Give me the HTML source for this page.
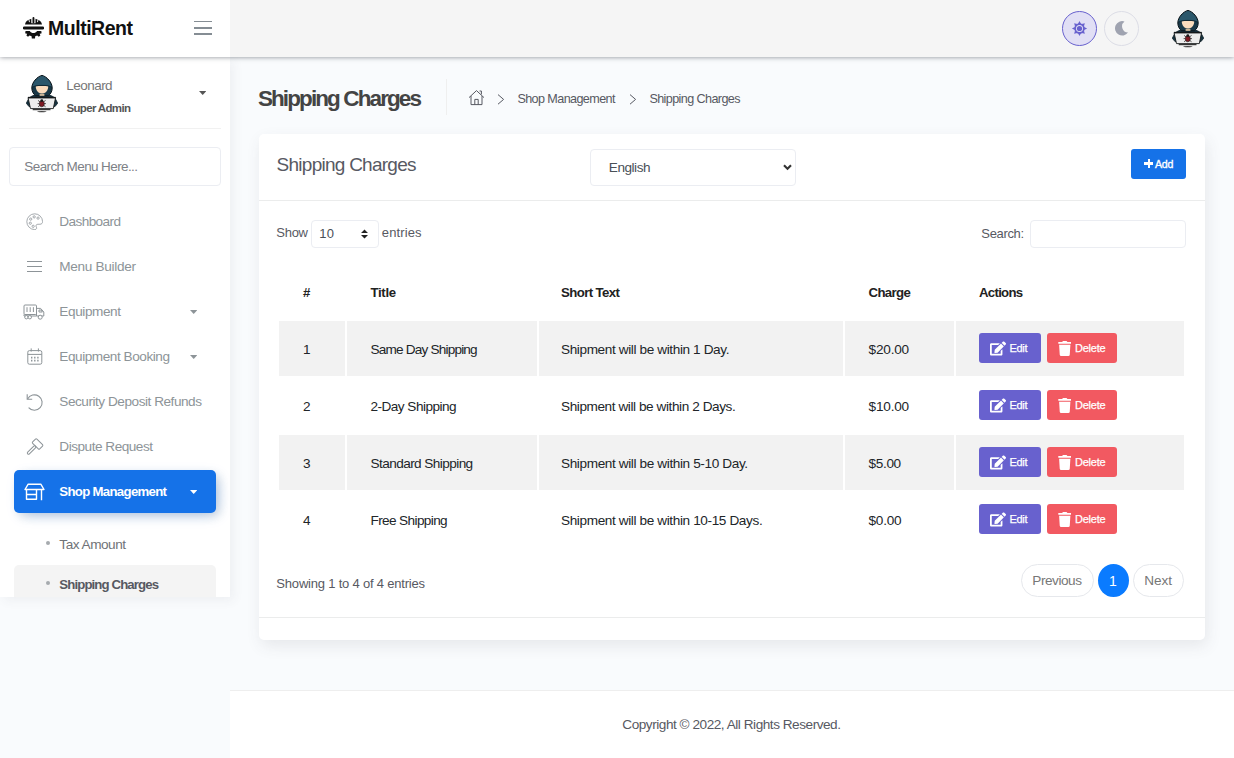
<!DOCTYPE html>
<html lang="en"><head>
<meta charset="utf-8">
<title>Shipping Charges</title>
<style>
*{box-sizing:border-box;margin:0;padding:0}
html,body{width:1234px;height:758px;overflow:hidden}
body{background:#f9fbfd;font-family:"Liberation Sans",sans-serif;font-size:14px;color:#575962;position:relative}
.abs{position:absolute}
.t{position:absolute;white-space:nowrap;line-height:20px;height:20px;margin-top:-10px;margin-left:-.05em}
/* header */
#logohdr{left:0;top:0;width:230px;height:57px;background:#fff;z-index:5}
#tophdr{left:230px;top:0;width:1004px;height:57px;background:#f5f5f5;z-index:4}
#hdrshadow{left:0;top:0;width:1234px;height:57px;box-shadow:0 0 5px rgba(18,23,39,.5);z-index:3}
#sidebar{left:0;top:57px;width:230px;height:540px;background:#fff;box-shadow:4px 4px 10px rgba(69,65,78,.06);z-index:2;overflow:hidden}
.mi{color:#8d9498;font-size:13.6px}
.caret{position:absolute;width:7.4px;height:4px;background:#8d9498;clip-path:polygon(0 0,100% 0,50% 100%)}
#active{left:14px;top:413px;width:202px;height:43px;background:#1572e8;border-radius:5px;box-shadow:4px 4px 10px 0 rgba(0,0,0,.1),4px 4px 15px -5px rgba(21,114,232,.4)}
#subactive{left:14px;top:508px;width:202px;height:40px;background:#f4f4f4;border-radius:5px}
.dot{position:absolute;width:4px;height:4px;border-radius:50%;background:#a6aaae}
/* main */
#card{left:259px;top:134px;width:946px;height:506px;background:#fff;border-radius:5px;box-shadow:2px 6px 15px 0 rgba(69,65,78,.1)}
.hl{position:absolute;height:1px;background:#ebecec}
.inp{position:absolute;background:#fff;border:1px solid #ebedf2;border-radius:4px}
.btn{position:absolute;border-radius:3px;color:#fff}
table{position:absolute;left:277px;top:262px;width:909px;border-collapse:separate;border-spacing:2px;font-size:13.6px;color:#212529}
td,th{height:55px;padding:1.6px 24px 0;text-align:left;vertical-align:middle;white-space:nowrap}
td:nth-child(2),th:nth-child(2){padding-left:23.5px}
td:nth-child(3),th:nth-child(3){padding-left:22px}
td:nth-child(4),th:nth-child(4){padding-left:23.5px}
th:nth-child(5){padding-left:23px}
th{font-weight:bold;color:#222;font-size:13.2px}
tr.odd td{background:#f2f2f2}
.ab{display:inline-flex;align-items:center;height:29.5px;position:relative;left:-1.5px;top:-1.1px;border-radius:3px;color:#fff;font-size:11px;padding-left:11px;vertical-align:middle}
.ab svg{flex:none}
.bt{margin-left:4px;white-space:nowrap;position:relative;top:-.5px;-webkit-text-stroke:.25px #fff}
.ct{display:inline-block;white-space:nowrap}
#footer{left:230px;top:690px;width:1004px;height:68px;background:#fff;border-top:1px solid #eee}
.pg{position:absolute;height:33.2px;border:1px solid #e6e8ec;border-radius:17px;background:#fff;top:563.8px}
</style>
</head>
<body>

<!-- header -->
<div class="abs" id="hdrshadow"></div>
<div class="abs" id="tophdr"></div>
<div class="abs" id="logohdr">
  <svg class="abs" style="left:23px;top:17px" width="21" height="21.5" viewBox="0 0 21 21.5">
    <g fill="#111">
      <path d="M2 7.6 C2.3 4.2 5.5 1.7 10.4 1.7 C15.3 1.7 18.6 4.2 19 7.6 Z"></path>
      <rect x="8.3" y="0" width="4.2" height="6.2" fill="#fff"></rect>
      <rect x="5.6" y="1.6" width=".9" height="3.6" fill="#fff" transform="rotate(-14 6 3.4)"></rect>
      <rect x="14.4" y="1.6" width=".9" height="3.6" fill="#fff" transform="rotate(14 14.8 3.4)"></rect>
      <rect x="9.5" y="0" width="1.9" height="6.2" rx=".9"></rect>
      <rect x="0" y="9.4" width="21" height="3" rx="1.2"></rect>
      <path d="M2.2 14.4 L3.2 13.9 H6.8 C7.6 15.4 9 16 10.4 16 C11.8 16 13.2 15.4 14 13.9 H17.6 L18.6 14.4 L18.4 16.4 L16.6 16.8 L17.4 18.6 L15.8 19.8 L14.2 18.6 L12.2 19.2 L12 21.4 H8.8 L8.6 19.2 L6.6 18.6 L5 19.8 L3.4 18.6 L4.2 16.8 L2.4 16.4 Z"></path>
    </g>
  </svg>
  <span class="t" style="left: 49px; top: 28.2px; font-size: 19.5px; font-weight: bold; color: rgb(17, 17, 17); letter-spacing: -0.482px;">MultiRent</span>
  <div class="abs" style="left:194px;top:20.6px;width:18px;height:1.3px;background:#858d94"></div>
  <div class="abs" style="left:194px;top:27px;width:18px;height:1.6px;background:#858d94"></div>
  <div class="abs" style="left:194px;top:33px;width:18px;height:1.9px;background:#858d94"></div>
</div>
<!-- top right -->
<div class="abs" style="left:1062px;top:11px;width:35px;height:35px;border-radius:50%;border:1px solid #6861ce;background:#e1dff5;z-index:6"></div>
<div class="abs" style="left:1103.5px;top:11px;width:35px;height:35px;border-radius:50%;border:1px solid #dcdde6;background:#f5f5f5;z-index:6"></div>
<svg class="abs" style="left:1071px;top:20px;z-index:7" width="17" height="17" viewBox="-8.5 -8.5 17 17">
  <g fill="#6861ce">
    <circle r="5.2"></circle>
    <g id="ray"><path d="M-1.6 -4.6 L0 -7.6 L1.6 -4.6 Z"></path></g>
    <g transform="rotate(45)"><path d="M-1.6 -4.6 L0 -7.6 L1.6 -4.6 Z"></path></g><g transform="rotate(90)"><path d="M-1.6 -4.6 L0 -7.6 L1.6 -4.6 Z"></path></g><g transform="rotate(135)"><path d="M-1.6 -4.6 L0 -7.6 L1.6 -4.6 Z"></path></g>
    <g transform="rotate(180)"><path d="M-1.6 -4.6 L0 -7.6 L1.6 -4.6 Z"></path></g><g transform="rotate(225)"><path d="M-1.6 -4.6 L0 -7.6 L1.6 -4.6 Z"></path></g><g transform="rotate(270)"><path d="M-1.6 -4.6 L0 -7.6 L1.6 -4.6 Z"></path></g><g transform="rotate(315)"><path d="M-1.6 -4.6 L0 -7.6 L1.6 -4.6 Z"></path></g>
  </g>
  <circle r="3.5" fill="#e1dff5"></circle><circle r="2.6" fill="#6861ce"></circle>
</svg>
<svg class="abs" style="left:1113.3px;top:20px;z-index:7" width="17" height="17" viewBox="0 0 17 17">
  <path d="M11.5 1.5 A7.2 7.2 0 1 0 15 12.6 A6.2 6.2 0 0 1 11.5 1.5 Z" fill="#9fa3b0"></path>
</svg>
<svg class="abs avatar" style="left:1172px;top:10px;z-index:7" width="32" height="38" viewBox="0 0 32 38"><g>
      <path d="M9 20 C5.5 21 2.8 22.4 2 25 L.3 28.2 L3 31.6 H29 L31.7 28.2 L30 25 C29.2 22.4 26.5 21 23 20 Z" fill="#173442" stroke="#0d1c24" stroke-width=".8"></path>
      <path d="M16 .4 C11 1.6 5.8 7.4 5.8 13 C5.8 16.6 7.6 19.2 9.6 20.8 H22.4 C24.4 19.2 26.2 16.6 26.2 13 C26.2 7.4 21 1.6 16 .4 Z" fill="#193847" stroke="#0b151b" stroke-width="1"></path>
      <path d="M16 1.1 C11.6 2.2 7 7.4 6.6 12 C9 10.6 12 10.3 16 10.3 C20 10.3 23 10.6 25.4 12 C25 7.4 20.4 2.2 16 1.1 Z" fill="#2b576b"></path>
      <path d="M6.6 12.2 C9 10.7 12 10.4 16 10.4 C20 10.4 23 10.7 25.4 12.2" fill="none" stroke="#0f222c" stroke-width=".8"></path>
      <path d="M9.8 11.5 C12 10.9 20 10.9 22.2 11.5 C22.2 15.7 19.5 18.5 16 18.5 C12.5 18.5 9.8 15.7 9.8 11.5 Z" fill="#fbdcbd"></path>
      <rect x="13.6" y="18.7" width="4.8" height="2.2" fill="#c9b497"></rect>
      <path d="M2 22.6 H29.6 L27.3 33.6 H4.5 Z" fill="#ededed" stroke="#14181a" stroke-width=".9"></path>
      <path d="M2 22.6 H29.6" stroke="#14181a" stroke-width="1.5"></path>
      <path d="M12 25.4 L14.2 27 M19.6 25.4 L17.4 27 M11.6 28.6 L13.6 28.6 M20 28.6 L18 28.6 M12 31.8 L14.2 30.2 M19.6 31.8 L17.4 30.2" stroke="#1a1a1a" stroke-width=".7" fill="none"></path>
      <ellipse cx="15.8" cy="28.8" rx="2.5" ry="3" fill="#7f1a23" stroke="#1a1a1a" stroke-width=".6"></ellipse>
      <circle cx="15.8" cy="25.6" r="1.4" fill="#1a1a1a"></circle>
      <rect x="6.7" y="34.1" width="17.8" height="1.1" fill="#222"></rect>
      <ellipse cx="15.8" cy="36.6" rx="4.8" ry=".7" fill="#444"></ellipse>
    </g></svg>

<!-- sidebar -->
<div class="abs" id="sidebar">
  <svg class="abs" style="left:26px;top:18px" width="32" height="38" viewBox="0 0 32 38">
    <g id="hacker">
      <path d="M9 20 C5.5 21 2.8 22.4 2 25 L.3 28.2 L3 31.6 H29 L31.7 28.2 L30 25 C29.2 22.4 26.5 21 23 20 Z" fill="#173442" stroke="#0d1c24" stroke-width=".8"></path>
      <path d="M16 .4 C11 1.6 5.8 7.4 5.8 13 C5.8 16.6 7.6 19.2 9.6 20.8 H22.4 C24.4 19.2 26.2 16.6 26.2 13 C26.2 7.4 21 1.6 16 .4 Z" fill="#193847" stroke="#0b151b" stroke-width="1"></path>
      <path d="M16 1.1 C11.6 2.2 7 7.4 6.6 12 C9 10.6 12 10.3 16 10.3 C20 10.3 23 10.6 25.4 12 C25 7.4 20.4 2.2 16 1.1 Z" fill="#2b576b"></path>
      <path d="M6.6 12.2 C9 10.7 12 10.4 16 10.4 C20 10.4 23 10.7 25.4 12.2" fill="none" stroke="#0f222c" stroke-width=".8"></path>
      <path d="M9.8 11.5 C12 10.9 20 10.9 22.2 11.5 C22.2 15.7 19.5 18.5 16 18.5 C12.5 18.5 9.8 15.7 9.8 11.5 Z" fill="#fbdcbd"></path>
      <rect x="13.6" y="18.7" width="4.8" height="2.2" fill="#c9b497"></rect>
      <path d="M2 22.6 H29.6 L27.3 33.6 H4.5 Z" fill="#ededed" stroke="#14181a" stroke-width=".9"></path>
      <path d="M2 22.6 H29.6" stroke="#14181a" stroke-width="1.5"></path>
      <path d="M12 25.4 L14.2 27 M19.6 25.4 L17.4 27 M11.6 28.6 L13.6 28.6 M20 28.6 L18 28.6 M12 31.8 L14.2 30.2 M19.6 31.8 L17.4 30.2" stroke="#1a1a1a" stroke-width=".7" fill="none"></path>
      <ellipse cx="15.8" cy="28.8" rx="2.5" ry="3" fill="#7f1a23" stroke="#1a1a1a" stroke-width=".6"></ellipse>
      <circle cx="15.8" cy="25.6" r="1.4" fill="#1a1a1a"></circle>
      <rect x="6.7" y="34.1" width="17.8" height="1.1" fill="#222"></rect>
      <ellipse cx="15.8" cy="36.6" rx="4.8" ry=".7" fill="#444"></ellipse>
    </g>
  </svg>
  <span class="t" style="left: 67px; top: 28.5px; font-size: 13.5px; color: rgb(119, 119, 119); letter-spacing: -0.545px;">Leonard</span>
  <span class="t" style="left: 67px; top: 50.5px; font-size: 11.5px; font-weight: bold; color: rgb(85, 85, 85); letter-spacing: -0.657px;">Super Admin</span>
  <div class="caret" style="left:199px;top:34px;background:#555"></div>
  <div class="hl" style="left:9px;top:71px;width:212px;background:#f1f1f1"></div>
  <div class="inp" style="left:9px;top:90px;width:212px;height:38.5px;border-color:#ebedf2"></div>
  <span class="t" style="left: 25px; top: 109.5px; font-size: 13.5px; color: rgb(125, 129, 134); letter-spacing: -0.605px;">Search Menu Here...</span>

  <!-- menu icons -->
  <svg class="abs" style="left:25.7px;top:155.8px" width="17.4" height="17.4" viewBox="0 0 17 17" fill="none" stroke="#979da2" stroke-width=".85">
    <path d="M8.5 .8 A7.7 7.7 0 1 0 8.5 16.2 C10.5 16.2 10.8 14.6 10 13.6 C9.2 12.4 10 11 11.6 11 L13.6 11 C15.4 11 16.2 9.8 16.2 8.5 A7.7 7.7 0 0 0 8.5 .8 Z"></path>
    <circle cx="4.6" cy="6" r="1.1"></circle><circle cx="8" cy="3.8" r="1.1"></circle><circle cx="11.8" cy="5" r="1.1"></circle><circle cx="4.2" cy="10" r="1.1"></circle><circle cx="7" cy="13" r="1.1"></circle>
  </svg>
  <div class="abs" style="left:27px;top:203.7px;width:15px;height:1.3px;background:#8d9498"></div>
  <div class="abs" style="left:27px;top:208.8px;width:15px;height:1.3px;background:#8d9498"></div>
  <div class="abs" style="left:27px;top:214px;width:15px;height:1.3px;background:#8d9498"></div>
  <svg class="abs" style="left:23px;top:246.5px" width="22" height="16" viewBox="0 0 22 16" fill="none" stroke="#8d9498" stroke-width="1">
    <rect x="1" y="1" width="12.5" height="9.5" rx="1"></rect>
    <path d="M4 3.2 V8 M7.2 3.2 V8 M10.4 3.2 V8"></path>
    <path d="M13.5 4.4 H17.6 L20.8 8 V12 H13.5 Z"></path>
    <path d="M1 10.5 V12 H13.5"></path>
    <circle cx="3.4" cy="13.2" r="1.7" fill="#fff"></circle><circle cx="6.8" cy="13.2" r="1.7" fill="#fff"></circle><circle cx="17.2" cy="13.2" r="2" fill="#fff"></circle>
    <path d="M16 6 H18 L19.4 8 H16 Z"></path>
  </svg>
  <svg class="abs" style="left:26px;top:291px" width="17" height="17" viewBox="0 0 17 17" fill="none" stroke="#8d9498" stroke-width="1">
    <rect x="1.8" y="2.6" width="14" height="13.6" rx="1.6"></rect>
    <path d="M1.8 6.4 H15.8 M5.2 .4 V3.6 M12.4 .4 V3.6"></path>
    <path d="M5 9.6 H6.4 M8.1 9.6 H9.5 M11.2 9.6 H12.6 M5 12.6 H6.4 M8.1 12.6 H9.5 M11.2 12.6 H12.6" stroke-width="1.6"></path>
  </svg>
  <svg class="abs" style="left:25.5px;top:335.5px" width="18" height="19" viewBox="0 0 18 19" fill="none" stroke="#8d9498" stroke-width="1.1">
    <path d="M1.2 1.2 V6.2 H6.2"></path>
    <path d="M1.6 6 A7.7 7.7 0 1 1 2.6 14.6"></path>
  </svg>
  <svg class="abs" style="left:25px;top:380px" width="20" height="20" viewBox="0 0 20 20" fill="none" stroke="#8d9498" stroke-width="1">
    <g transform="rotate(45 12.6 7)">
      <rect x="7.6" y="4" width="10" height="6" rx="1"></rect>
      <rect x="11.4" y="10" width="2.4" height="11" rx="1.2"></rect>
    </g>
  </svg>
  <div class="abs" id="active"></div>
  <svg class="abs" style="left:24px;top:426px;z-index:2" width="21" height="18" viewBox="0 0 21 18" fill="none" stroke="#fff" stroke-width="1.4" stroke-linejoin="round">
    <path d="M4.2 1.2 H16.8 L20 6.5 H1 Z"></path>
    <path d="M2.5 6.5 V16.3 H12.5 V6.5 M2.5 11.5 H12.5 M17.5 6.5 V17.3"></path>
  </svg>
  <span class="t mi" style="left: 60px; top: 164.5px; letter-spacing: -0.604px; font-size: 13.6px;">Dashboard</span>
  <span class="t mi" style="left: 60px; top: 209.5px; letter-spacing: -0.312px; font-size: 13.6px;">Menu Builder</span>
  <span class="t mi" style="left: 60px; top: 254.5px; letter-spacing: -0.415px; font-size: 13.6px;">Equipment</span>
  <span class="t mi" style="left: 60px; top: 299.5px; letter-spacing: -0.451px; font-size: 13.6px;">Equipment Booking</span>
  <span class="t mi" style="left: 60px; top: 344.5px; letter-spacing: -0.466px; font-size: 13.6px;">Security Deposit Refunds</span>
  <span class="t mi" style="left: 60px; top: 389.5px; letter-spacing: -0.487px; font-size: 13.6px;">Dispute Request</span>
  <span class="t" style="left: 60px; top: 434.5px; color: rgb(255, 255, 255); font-weight: bold; font-size: 13.2px; z-index: 2; letter-spacing: -0.684px;">Shop Management</span>
  <div class="caret" style="left:190px;top:253px"></div>
  <div class="caret" style="left:190px;top:298px"></div>
  <div class="caret" style="left:190px;top:433px;background:#fff;z-index:2"></div>
  <div class="dot" style="left:46px;top:484px"></div>
  <span class="t" style="left: 60px; top: 487.6px; color: rgb(111, 115, 119); font-size: 13.6px; letter-spacing: -0.483px;">Tax Amount</span>
  <div class="abs" id="subactive"></div>
  <div class="dot" style="left:46px;top:524px;z-index:2"></div>
  <span class="t" style="left: 60px; top: 527.8px; color: rgb(87, 89, 98); font-weight: bold; font-size: 13.2px; letter-spacing: -0.879px;">Shipping Charges</span>
</div>

<!-- page header -->
<span class="t" style="left: 259px; top: 98.5px; font-size: 22.5px; font-weight: bold; color: rgb(68, 68, 68); line-height: 30px; height: 30px; margin-top: -14.7px; letter-spacing: -1.893px;">Shipping Charges</span>
<div class="abs" style="left:446px;top:79px;width:1px;height:36px;background:#efefef"></div>
<svg class="abs" style="left:468px;top:89px" width="17" height="17" viewBox="0 0 17 17" fill="none" stroke="#575962" stroke-width="1">
  <path d="M1 8.6 L8.5 1.6 L16 8.6"></path><path d="M3 7 V15.6 H14 V7"></path><path d="M6.8 15.6 V10.4 H10.2 V15.6"></path><path d="M11.6 2 H13.4 V5.4"></path>
</svg>
<svg class="abs" style="left:497px;top:94px" width="8" height="11" viewBox="0 0 8 11" fill="none" stroke="#575962" stroke-width="1"><path d="M1 .6 L6.6 5.4 L1 10.2"></path></svg>
<span class="t" style="left: 518px; top: 98.5px; font-size: 12.6px; letter-spacing: -0.592px;">Shop Management</span>
<svg class="abs" style="left:629px;top:94px" width="8" height="11" viewBox="0 0 8 11" fill="none" stroke="#575962" stroke-width="1"><path d="M1 .6 L6.6 5.4 L1 10.2"></path></svg>
<span class="t" style="left: 650px; top: 98.5px; font-size: 12.6px; letter-spacing: -0.6px;">Shipping Charges</span>

<!-- card -->
<div class="abs" id="card"></div>
<span class="t" style="left: 277.5px; top: 165px; font-size: 19px; color: rgb(87, 89, 98); line-height: 28px; height: 28px; margin-top: -14px; letter-spacing: -0.74px;">Shipping Charges</span>
<div class="inp" style="left:590px;top:149px;width:205.5px;height:36.5px"></div>
<span class="t" style="left: 609.5px; top: 167.5px; font-size: 13.6px; color: rgb(73, 80, 87); letter-spacing: -0.486px;">English</span>
<svg class="abs" style="left:783px;top:164px" width="9" height="7" viewBox="0 0 9 7" fill="none" stroke="#333" stroke-width="2.1"><path d="M1 1.2 L4.5 4.8 L8 1.2"></path></svg>
<div class="btn" style="left:1131px;top:149px;width:55px;height:30px;background:#1572e8"></div>
<div class="abs" style="left:1144px;top:162.4px;width:9.4px;height:2.4px;background:#fff"></div>
<div class="abs" style="left:1147.5px;top:158.9px;width:2.4px;height:9.4px;background:#fff"></div>
<span class="t" style="left: 1155.4px; top: 163.5px; font-size: 10.6px; color: rgb(255, 255, 255); -webkit-text-stroke: 0.35px rgb(255, 255, 255); letter-spacing: -0.165px;">Add</span>
<div class="hl" style="left:259px;top:200px;width:946px"></div>

<span class="t" style="left: 277px; top: 232.5px; font-size: 13px; letter-spacing: -0.294px;">Show</span>
<div class="inp" style="left:311px;top:219.5px;width:68px;height:28px"></div>
<span class="t" style="left: 320px; top: 234px; font-size: 13px; color: rgb(73, 80, 87); letter-spacing: 0.181px;">10</span>
<svg class="abs" style="left:360.5px;top:229px" width="7" height="10" viewBox="0 0 7 10" fill="#222"><path d="M0 4 L3.5 .4 L7 4 Z M0 6 L3.5 9.6 L7 6 Z"></path></svg>
<span class="t" style="left: 382.5px; top: 232.5px; font-size: 13px; letter-spacing: 0.103px;">entries</span>
<span class="t" style="left: 982px; top: 234px; font-size: 13px; letter-spacing: -0.36px;">Search:</span>
<div class="inp" style="left:1030px;top:219.5px;width:156px;height:28.5px"></div>

<table>
<tbody><tr><th style="width:66px"><span class="ct" style="letter-spacing: 0.716px; font-size: 13.2px;">#</span></th><th style="width:190px"><span class="ct" style="letter-spacing: -0.304px; font-size: 13.2px;">Title</span></th><th style="width:304px"><span class="ct" style="letter-spacing: -0.586px; font-size: 13.2px;">Short Text</span></th><th style="width:109px"><span class="ct" style="letter-spacing: -0.636px; font-size: 13.2px;">Charge</span></th><th style="width:228px"><span class="ct" style="letter-spacing: -0.7px; font-size: 13.2px;">Actions</span></th></tr>
<tr class="odd"><td>1</td><td><span class="ct" style="letter-spacing: -0.811px; font-size: 13.6px;">Same Day Shipping</span></td><td><span class="ct" style="letter-spacing: -0.383px; font-size: 13.6px;">Shipment will be within 1 Day.</span></td><td><span class="ct" style="letter-spacing: -0.18px; font-size: 13.6px;">$20.00</span></td><td><span class="ab" style="background:#6861ce;width:62px"><svg width="16" height="15" viewBox="0 0 576 512" fill="#fff"><g><path d="M402.6 83.2l90.2 90.2c3.8 3.8 3.8 10 0 13.8L274.4 405.6l-92.8 10.3c-12.4 1.4-22.9-9.1-21.5-21.5l10.3-92.8L388.8 83.2c3.8-3.8 10-3.8 13.8 0zm162-22.9l-48.8-48.8c-15.2-15.2-39.9-15.2-55.2 0l-35.4 35.4c-3.8 3.8-3.8 10 0 13.8l90.2 90.2c3.8 3.8 10 3.8 13.8 0l35.4-35.4c15.2-15.3 15.2-40 0-55.2zM384 346.2V448H64V128h229.8c3.2 0 6.2-1.3 8.5-3.5l40-40c7.6-7.6 2.2-20.5-8.5-20.5H48C21.5 64 0 85.5 0 112v352c0 26.5 21.5 48 48 48h352c26.5 0 48-21.5 48-48V306.2c0-10.7-12.9-16-20.5-8.5l-40 40c-2.2 2.3-3.5 5.3-3.5 8.5z"></path></g></svg><span class="bt" style="letter-spacing: -0.306px; font-size: 11px;">Edit</span></span><span class="ab" style="background:#f25961;width:70px;margin-left:6px"><svg width="13.5" height="15" viewBox="0 0 448 512" fill="#fff"><g><path d="M432 32H312l-9.4-18.7A24 24 0 0 0 281.1 0H166.8a23.72 23.72 0 0 0-21.4 13.3L136 32H16A16 16 0 0 0 0 48v32a16 16 0 0 0 16 16h416a16 16 0 0 0 16-16V48a16 16 0 0 0-16-16zM53.2 467a48 48 0 0 0 47.9 45h245.8a48 48 0 0 0 47.9-45L416 128H32z"></path></g></svg><span class="bt" style="letter-spacing: -0.249px; font-size: 11px;">Delete</span></span></td></tr>
<tr><td>2</td><td><span class="ct" style="letter-spacing: -0.529px; font-size: 13.6px;">2-Day Shipping</span></td><td><span class="ct" style="letter-spacing: -0.423px; font-size: 13.6px;">Shipment will be within 2 Days.</span></td><td><span class="ct" style="letter-spacing: -0.18px; font-size: 13.6px;">$10.00</span></td><td><span class="ab" style="background:#6861ce;width:62px"><svg width="16" height="15" viewBox="0 0 576 512" fill="#fff"><g><path d="M402.6 83.2l90.2 90.2c3.8 3.8 3.8 10 0 13.8L274.4 405.6l-92.8 10.3c-12.4 1.4-22.9-9.1-21.5-21.5l10.3-92.8L388.8 83.2c3.8-3.8 10-3.8 13.8 0zm162-22.9l-48.8-48.8c-15.2-15.2-39.9-15.2-55.2 0l-35.4 35.4c-3.8 3.8-3.8 10 0 13.8l90.2 90.2c3.8 3.8 10 3.8 13.8 0l35.4-35.4c15.2-15.3 15.2-40 0-55.2zM384 346.2V448H64V128h229.8c3.2 0 6.2-1.3 8.5-3.5l40-40c7.6-7.6 2.2-20.5-8.5-20.5H48C21.5 64 0 85.5 0 112v352c0 26.5 21.5 48 48 48h352c26.5 0 48-21.5 48-48V306.2c0-10.7-12.9-16-20.5-8.5l-40 40c-2.2 2.3-3.5 5.3-3.5 8.5z"></path></g></svg><span class="bt" style="letter-spacing: -0.306px; font-size: 11px;">Edit</span></span><span class="ab" style="background:#f25961;width:70px;margin-left:6px"><svg width="13.5" height="15" viewBox="0 0 448 512" fill="#fff"><g><path d="M432 32H312l-9.4-18.7A24 24 0 0 0 281.1 0H166.8a23.72 23.72 0 0 0-21.4 13.3L136 32H16A16 16 0 0 0 0 48v32a16 16 0 0 0 16 16h416a16 16 0 0 0 16-16V48a16 16 0 0 0-16-16zM53.2 467a48 48 0 0 0 47.9 45h245.8a48 48 0 0 0 47.9-45L416 128H32z"></path></g></svg><span class="bt" style="letter-spacing: -0.249px; font-size: 11px;">Delete</span></span></td></tr>
<tr class="odd"><td>3</td><td><span class="ct" style="letter-spacing: -0.574px; font-size: 13.6px;">Standard Shipping</span></td><td><span class="ct" style="letter-spacing: -0.379px; font-size: 13.6px;">Shipment will be within 5-10 Day.</span></td><td><span class="ct" style="letter-spacing: -0.338px; font-size: 13.6px;">$5.00</span></td><td><span class="ab" style="background:#6861ce;width:62px"><svg width="16" height="15" viewBox="0 0 576 512" fill="#fff"><g><path d="M402.6 83.2l90.2 90.2c3.8 3.8 3.8 10 0 13.8L274.4 405.6l-92.8 10.3c-12.4 1.4-22.9-9.1-21.5-21.5l10.3-92.8L388.8 83.2c3.8-3.8 10-3.8 13.8 0zm162-22.9l-48.8-48.8c-15.2-15.2-39.9-15.2-55.2 0l-35.4 35.4c-3.8 3.8-3.8 10 0 13.8l90.2 90.2c3.8 3.8 10 3.8 13.8 0l35.4-35.4c15.2-15.3 15.2-40 0-55.2zM384 346.2V448H64V128h229.8c3.2 0 6.2-1.3 8.5-3.5l40-40c7.6-7.6 2.2-20.5-8.5-20.5H48C21.5 64 0 85.5 0 112v352c0 26.5 21.5 48 48 48h352c26.5 0 48-21.5 48-48V306.2c0-10.7-12.9-16-20.5-8.5l-40 40c-2.2 2.3-3.5 5.3-3.5 8.5z"></path></g></svg><span class="bt" style="letter-spacing: -0.306px; font-size: 11px;">Edit</span></span><span class="ab" style="background:#f25961;width:70px;margin-left:6px"><svg width="13.5" height="15" viewBox="0 0 448 512" fill="#fff"><g><path d="M432 32H312l-9.4-18.7A24 24 0 0 0 281.1 0H166.8a23.72 23.72 0 0 0-21.4 13.3L136 32H16A16 16 0 0 0 0 48v32a16 16 0 0 0 16 16h416a16 16 0 0 0 16-16V48a16 16 0 0 0-16-16zM53.2 467a48 48 0 0 0 47.9 45h245.8a48 48 0 0 0 47.9-45L416 128H32z"></path></g></svg><span class="bt" style="letter-spacing: -0.249px; font-size: 11px;">Delete</span></span></td></tr>
<tr><td>4</td><td><span class="ct" style="letter-spacing: -0.622px; font-size: 13.6px;">Free Shipping</span></td><td><span class="ct" style="letter-spacing: -0.38px; font-size: 13.6px;">Shipment will be within 10-15 Days.</span></td><td><span class="ct" style="letter-spacing: -0.213px; font-size: 13.6px;">$0.00</span></td><td><span class="ab" style="background:#6861ce;width:62px"><svg width="16" height="15" viewBox="0 0 576 512" fill="#fff"><g><path d="M402.6 83.2l90.2 90.2c3.8 3.8 3.8 10 0 13.8L274.4 405.6l-92.8 10.3c-12.4 1.4-22.9-9.1-21.5-21.5l10.3-92.8L388.8 83.2c3.8-3.8 10-3.8 13.8 0zm162-22.9l-48.8-48.8c-15.2-15.2-39.9-15.2-55.2 0l-35.4 35.4c-3.8 3.8-3.8 10 0 13.8l90.2 90.2c3.8 3.8 10 3.8 13.8 0l35.4-35.4c15.2-15.3 15.2-40 0-55.2zM384 346.2V448H64V128h229.8c3.2 0 6.2-1.3 8.5-3.5l40-40c7.6-7.6 2.2-20.5-8.5-20.5H48C21.5 64 0 85.5 0 112v352c0 26.5 21.5 48 48 48h352c26.5 0 48-21.5 48-48V306.2c0-10.7-12.9-16-20.5-8.5l-40 40c-2.2 2.3-3.5 5.3-3.5 8.5z"></path></g></svg><span class="bt" style="letter-spacing: -0.306px; font-size: 11px;">Edit</span></span><span class="ab" style="background:#f25961;width:70px;margin-left:6px"><svg width="13.5" height="15" viewBox="0 0 448 512" fill="#fff"><g><path d="M432 32H312l-9.4-18.7A24 24 0 0 0 281.1 0H166.8a23.72 23.72 0 0 0-21.4 13.3L136 32H16A16 16 0 0 0 0 48v32a16 16 0 0 0 16 16h416a16 16 0 0 0 16-16V48a16 16 0 0 0-16-16zM53.2 467a48 48 0 0 0 47.9 45h245.8a48 48 0 0 0 47.9-45L416 128H32z"></path></g></svg><span class="bt" style="letter-spacing: -0.249px; font-size: 11px;">Delete</span></span></td></tr>
</tbody></table>

<span class="t" style="left: 277px; top: 584px; font-size: 13px; letter-spacing: -0.203px;">Showing 1 to 4 of 4 entries</span>
<div class="pg" style="left:1021px;width:73px"></div>
<span class="t" style="left: 1033px; top: 580.5px; font-size: 13.6px; color: rgb(119, 119, 119); letter-spacing: -0.459px;">Previous</span>
<div class="abs" style="left:1098px;top:564px;width:31px;height:33px;border-radius:50%;background:#0a7bff"></div>
<span class="t" style="left:1109.6px;top:580.5px;font-size:14px;color:#fff">1</span>
<div class="pg" style="left:1133px;width:51px"></div>
<span class="t" style="left: 1145px; top: 580.5px; font-size: 13.6px; color: rgb(119, 119, 119); letter-spacing: -0.091px;">Next</span>
<div class="hl" style="left:259px;top:617px;width:946px"></div>

<!-- footer -->
<div class="abs" id="footer"></div>
<span class="t" style="left: 623px; top: 725px; font-size: 13.6px; letter-spacing: -0.467px;">Copyright © 2022, All Rights Reserved.</span>


</body></html>
